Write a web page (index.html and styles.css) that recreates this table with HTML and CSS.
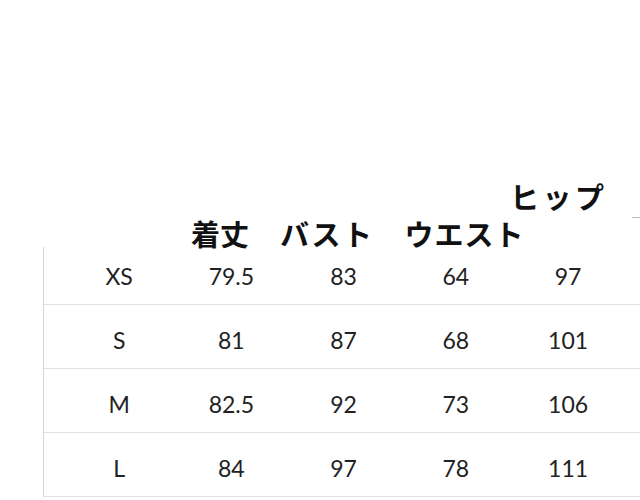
FILE: index.html
```
<!DOCTYPE html>
<html lang="ja">
<head>
<meta charset="utf-8">
<title>サイズ表</title>
<link rel="stylesheet" href="styles.css">
</head>
<body>
<div class="page">
  <div class="hip-row">
    <span class="head hip">ヒップ</span>
    <span class="tick"></span>
  </div>
  <div class="head-row">
    <span class="head h-length">着丈</span>
    <span class="head h-bust">バスト</span>
    <span class="head h-waist">ウエスト</span>
  </div>
  <div class="table">
    <div class="rule"></div>
    <div class="rows">
      <div class="row"><span>XS</span><span>79.5</span><span>83</span><span>64</span><span>97</span></div>
      <div class="row"><span>S</span><span>81</span><span>87</span><span>68</span><span>101</span></div>
      <div class="row"><span>M</span><span>82.5</span><span>92</span><span>73</span><span>106</span></div>
      <div class="row"><span>L</span><span>84</span><span>97</span><span>78</span><span>111</span></div>
    </div>
  </div>
</div>
</body>
</html>
```
FILE: styles.css
```
html, body {
  margin: 0;
  background: #fff;
}
body {
  width: 640px;
  height: 500px;
  overflow: hidden;
}
.page {
  padding-top: 182px;
  font-family: "Noto Sans CJK JP", sans-serif;
}
.head {
  font-size: 29px;
  line-height: 29px;
  font-weight: 700;
  color: #111;
  white-space: nowrap;
}
.hip-row {
  display: flex;
  align-items: flex-start;
  height: 37px;
}
.hip {
  margin-left: 510px;
  letter-spacing: 3.5px;
}
.tick {
  margin-left: auto;
  align-self: flex-end;
  width: 8px;
  height: 1px;
  margin-bottom: 1px;
  background: #b8b8b8;
}
.head-row {
  display: flex;
  height: 28px;
  margin-bottom: -6px;
  position: relative;
}
.h-length {
  margin-left: 191px;
}
.h-bust {
  margin-left: 31px;
  letter-spacing: 2.5px;
}
.h-waist {
  margin-left: 30px;
  letter-spacing: 1px;
}
.table {
  display: flex;
}
.rule {
  width: 1px;
  margin-left: 43px;
  margin-top: 6px;
  background: #d6d6d6;
}
.rows {
  flex: 1;
}
.row {
  display: grid;
  grid-template-columns: repeat(5, 112.25px);
  padding-left: 19px;
  padding-top: 24px;
  height: 64px;
  box-sizing: border-box;
  border-bottom: 1px solid #e0e0e0;
  font-family: Lato, "Liberation Sans", sans-serif;
  font-size: 23px;
  line-height: 23px;
  color: #222;
}
.row span {
  text-align: center;
}
```
